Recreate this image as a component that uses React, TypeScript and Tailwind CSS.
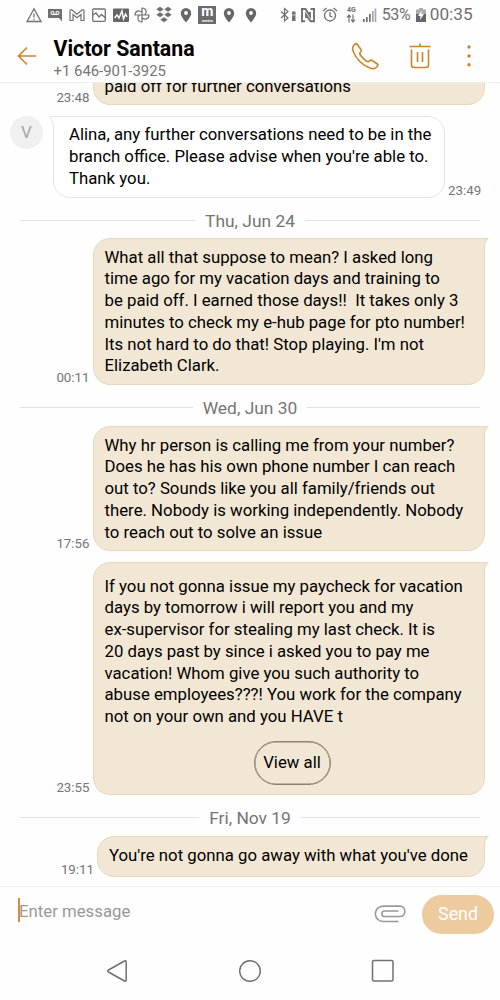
import type { ReactNode } from 'react'

function StatusIcon({ children }: { children: ReactNode }) {
  return (
    <svg width="21.750" height="22" viewBox="0 0 21.750 22" fill="none" stroke="#707070" strokeWidth="1.300" className="shrink-0">
      {children}
    </svg>
  )
}

function Pin() {
  return (
    <StatusIcon>
      <path d="M11 4a5.200 5.200 0 0 0-5.200 5.200C5.800 12.800 11 18.500 11 18.500s5.200-5.700 5.200-9.300A5.200 5.200 0 0 0 11 4Z" fill="#666" stroke="none" />
      <circle cx="11" cy="9" r="1.900" fill="#fff" stroke="none" />
    </StatusIcon>
  )
}

function StatusBar() {
  return (
    <div className="flex h-[30px] shrink-0 items-center pl-[22.500px] text-[#707070]">
      <StatusIcon>
        <path d="M11 4.800 18 17.500H4L11 4.800Z" />
        <path d="M11 9.500v4M11 14.800v1.400" />
      </StatusIcon>
      <StatusIcon>
        <path d="M4 5h14v12.500l-3-3.500H4V5Z" fill="#707070" stroke="none" />
        <circle cx="8.500" cy="9" r="1.500" stroke="#fff" strokeWidth="1.100" />
        <circle cx="13.500" cy="9" r="1.500" stroke="#fff" strokeWidth="1.100" />
        <path d="M8.500 10.500h5" stroke="#fff" strokeWidth="1.100" />
      </StatusIcon>
      <StatusIcon>
        <path d="M4 16.500V6.800c0-1.200 1.200-1.400 2-.8l5 4.200L16 6c.8-.6 2-.4 2 .8v9.700h-3v-6l-4 3.300-4-3.300v6H4Z" strokeWidth="1.200" />
      </StatusIcon>
      <StatusIcon>
        <rect x="4.700" y="5" width="12.600" height="12.300" rx="1" />
        <path d="m5 11 3-2 3 4 2.500-2.500 4 3.500" />
      </StatusIcon>
      <StatusIcon>
        <rect x="3" y="4.500" width="16" height="13.500" rx="1" fill="#666" stroke="none" />
        <path d="m4.500 14 2.500-3 2 3 3-7 1.500 8 2-5 1.500 3" stroke="#fff" strokeWidth="1.400" />
      </StatusIcon>
      <StatusIcon>
        <path d="M11 11V4c4 0 5.500 4 2.700 7ZM11 11h7c0 4-4 5.500-7 2.700ZM11 11v7c-4 0-5.500-4-2.700-7ZM11 11H4c0-4 4-5.500 7-2.700Z" strokeWidth="1.200" />
      </StatusIcon>
      <StatusIcon>
        <path d="m7 2.500 4 2.700-4 2.700-4-2.700 4-2.700Zm8 0 4 2.700-4 2.700-4-2.700 4-2.700ZM7 8l4 2.700-4 2.700-4-2.700L7 8Zm8 0 4 2.700-4 2.700-4-2.700L15 8Zm-4 5 4 2.700-4 2.700-4-2.700 4-2.700Z" fill="#707070" stroke="#fff" strokeWidth=".4" />
      </StatusIcon>
      <Pin />
      <div className="mx-[1.900px] flex h-[18px] w-[18px] shrink-0 flex-col items-center bg-[#6b6b6b] font-bold text-white">
        <span className="h-[13px] text-[14px] leading-[11px]">m</span>
        <span className="text-[4px] leading-[4px]">metro</span>
      </div>
      <Pin />
      <Pin />
      <svg width="17" height="22" viewBox="0 0 17 22" fill="none" stroke="#707070" strokeWidth="1.200" className="ml-[18px] shrink-0">
        <path d="m1 7.500 7 6.500-3.500 3V4.500L8 7.500 1 14" />
        <path d="M12 7.500h3.500V17H12z" fill="#707070" stroke="none" />
        <path d="M12 11h3.500" stroke="#fff" strokeWidth=".7" />
      </svg>
      <svg width="16" height="22" viewBox="0 0 16 22" fill="none" stroke="#707070" strokeWidth="1.900" className="ml-[3px] shrink-0">
        <path d="M5 17.200H2V5h3.500l4.500 7V8M10.500 5H14v12.200h-3.500L6 10.500V14" />
      </svg>
      <svg width="18" height="22" viewBox="0 0 18 22" fill="none" stroke="#707070" strokeWidth="1.300" className="ml-[5px] shrink-0">
        <circle cx="9" cy="11.500" r="5.500" />
        <path d="M9 8v4l2.500 1M2 7l3.500-3M16 7l-3.500-3" />
      </svg>
      <div className="ml-[7px] flex w-[11px] flex-col items-center">
        <span className="text-[7px] font-bold leading-[7px]">4G</span>
        <svg width="10" height="9" viewBox="0 0 10 9" fill="none" stroke="currentColor" strokeWidth="1.200">
          <path d="M3 8.500V1.500M1 3.500l2-2.500 2 2.500M7 .5v7M5 5.500 7 8l2-2.500" />
        </svg>
      </div>
      <svg width="15" height="22" viewBox="0 0 15 22" fill="#707070" className="ml-[5px] shrink-0">
        <path d="M1 15h1.700v3H1zM4 13h1.700v5H4zM7 10h1.700v8H7z" />
        <path d="M10 7h1.700v11H10zM12.600 4.500h1.700V18h-1.700z" fill="#aaa" />
      </svg>
      <span className="ml-[5px] w-[29px] text-[16px] tracking-[-0.400px]">53%</span>
      <svg width="10" height="22" viewBox="0 0 10 22" className="ml-[5px] shrink-0">
        <path d="M3 4h4v1.500h3V18H0V5.500h3V4Z" fill="#aaa" />
        <path d="M0 10h10v8H0z" fill="#666" />
        <path d="M5.500 6.500 2 12h2.500l-.5 4 4-6H5.300l.2-3.500Z" fill="#fff" />
      </svg>
      <span className="ml-[4px] text-[17.200px]">00:35</span>
    </div>
  )
}

function Header() {
  return (
    <header className="flex h-[53px] shrink-0 border-b border-[#eeeeee]">
      <svg width="20" height="20" viewBox="0 0 20 20" fill="none" stroke="#ca8429" strokeWidth="1.600" className="mt-[16px] ml-[17px] shrink-0">
        <path d="M19 10H1.500M10 1.500 1.500 10l8.500 8.500" />
      </svg>
      <div className="ml-[16.500px] w-[297.500px] whitespace-nowrap">
        <h1 className="mt-[7px] text-[21.300px] font-bold leading-[24px] text-black">Victor Santana</h1>
        <p className="mt-[2px] text-[14.900px] leading-[16px] text-[#757575]">+1 646-901-3925</p>
      </div>
      <svg width="28" height="28" viewBox="0 0 28 28" fill="none" stroke="#ca8429" strokeWidth="1.600" strokeLinejoin="round" className="mt-[12px] shrink-0">
        <path d="m5.500 1.500 4.500 6c.7 1 .4 1.700-.5 2.500-1.300 1.100-1 2 .2 3.600 1.500 2 3.200 3.700 5.300 5.200 1.700 1.200 2.600 1.400 3.600.2.900-1 1.600-1.200 2.600-.5l5.800 4c-.5 3.500-4 5-8 3.500C11.500 23.200 5.300 17 2.200 9.500.8 6 2 2.500 5.500 1.500Z" />
      </svg>
      <svg width="22" height="26" viewBox="0 0 22 26" fill="none" stroke="#ca8429" strokeWidth="1.600" className="mt-[12.500px] ml-[29.500px] shrink-0">
        <path d="M.5 3.500h21M11 .5v3M2.500 6.500V22c0 1.800 1 2.500 2.500 2.500h12c1.500 0 2.500-.7 2.500-2.500V6.500M8.500 9v10M13.500 9v10" />
      </svg>
      <svg width="6" height="24" viewBox="0 0 6 24" fill="#ca8429" className="mt-[14px] ml-[35.500px] shrink-0">
        <circle cx="3" cy="3" r="1.700" />
        <circle cx="3" cy="12" r="1.700" />
        <circle cx="3" cy="20.800" r="1.700" />
      </svg>
    </header>
  )
}

function DateDivider({ children }: { children: ReactNode }) {
  return (
    <div className="mx-[20px] flex items-center gap-[10px] text-[17.400px] leading-[22px] text-[#757575]">
      <span className="-mt-[2px] h-px flex-1 bg-[#e2e2e2]" />
      {children}
      <span className="-mt-[2px] h-px flex-1 bg-[#e2e2e2]" />
    </div>
  )
}

function SentMessage({ time, lines, className, children }: { time: string; lines: string[]; className: string; children?: ReactNode }) {
  return (
    <div className="flex items-end justify-end pr-[15px]">
      <time className="mr-[3px] text-[13.300px] leading-[14px] text-[#757575]">{time}</time>
      <div className={`relative rounded-[17px] rounded-tr-none border border-[#e6d8ba] bg-[#f2e7d5] pl-[11px] text-[16.780px] leading-[21.800px] text-black ${className}`}>
        {lines.map((line) => (
          <p key={line} className="whitespace-pre">{line}</p>
        ))}
        {children}
        {/* Bubble tail */}
        <svg width="6" height="14" viewBox="0 0 6 14" className="absolute -top-px -right-[5px]">
          <path d="M0 0h5.500C2.500 4 1 7 1 14H0Z" fill="#f2e7d5" />
          <path d="M0 .5h5C2 4 .5 7 .5 14" fill="none" stroke="#e6d8ba" />
          <path d="M0 1h.8v13H0z" fill="#f2e7d5" />
        </svg>
      </div>
    </div>
  )
}

export default function App() {
  return (
    <div className="flex h-[1000px] w-[500px] flex-col overflow-hidden bg-[#fefefe] font-['Roboto',sans-serif]">
      <StatusBar />
      <Header />

      {/* Conversation */}
      <main className="h-[803px] shrink-0 overflow-hidden">
        <div className="-mt-[19px]">
          <SentMessage time="23:48" lines={['paid off for further conversations']} className="h-[41px] w-[392.500px] pt-[11px]" />
        </div>

        <div className="mt-[11px] flex">
          <div className="ml-[10px] flex h-[33px] w-[33px] items-center justify-center rounded-full bg-[#f0f0f0] text-[17px] text-[#a5a5a5]">V</div>
          <div className="relative ml-[10px] h-[82px] w-[392px] rounded-[17px] rounded-tl-none border border-[#e4e4e4] bg-white pt-[7px] pl-[15px] text-[16.780px] leading-[21.800px] text-black">
            <p className="whitespace-pre">Alina, any further conversations need to be in the</p>
            <p>branch office. Please advise when you're able to.</p>
            <p>Thank you.</p>
            <svg width="6" height="14" viewBox="0 0 6 14" className="absolute -top-px -left-[5px]">
              <path d="M6 0H.5C3.500 4 4.500 7 4.500 14H6Z" fill="#fff" />
              <path d="M6 .5H1C3.500 4 4.500 7 4.500 14" fill="none" stroke="#e4e4e4" />
            </svg>
          </div>
          <time className="ml-[3px] self-end text-[13.300px] leading-[14px] text-[#757575]">23:49</time>
        </div>

        <div className="mt-[12px] mb-[6px]"><DateDivider>Thu, Jun 24</DateDivider></div>
        <SentMessage
          time="00:11"
          className="h-[147px] w-[392.500px] pt-[7.500px]"
          lines={[
            'What all that suppose to mean? I asked long',
            'time ago for my vacation days and training to',
            'be paid off. I earned those days!!  It takes only 3',
            'minutes to check my e-hub page for pto number!',
            "Its not hard to do that! Stop playing. I'm not",
            'Elizabeth Clark.',
          ]}
        />
        <div className="mt-[12px] mb-[7px]"><DateDivider>Wed, Jun 30</DateDivider></div>
        <SentMessage
          time="17:56"
          className="h-[125px] w-[392.500px] pt-[7.500px]"
          lines={[
            'Why hr person is calling me from your number?',
            'Does he has his own phone number I can reach',
            'out to? Sounds like you all family/friends out',
            'there. Nobody is working independently. Nobody',
            'to reach out to solve an issue',
          ]}
        />
        <div className="h-[11px]" />
        <SentMessage
          time="23:55"
          className="h-[233px] w-[392.500px] pt-[12.500px]"
          lines={[
            'If you not gonna issue my paycheck for vacation',
            'days by tomorrow i will report you and my',
            'ex-supervisor for stealing my last check. It is',
            '20 days past by since i asked you to pay me',
            'vacation! Whom give you such authority to',
            'abuse employees???! You work for the company',
            'not on your own and you HAVE t',
          ]}
        >
          <button className="mt-[13px] ml-[149px] block h-[44px] w-[77px] rounded-full border-[1.500px] border-[#8e8270] text-center shadow-[inset_0_0_0_0.500px_#8e8270]">View all</button>
        </SentMessage>
        <div className="mt-[12px] mb-[7px]"><DateDivider>Fri, Nov 19</DateDivider></div>
        <SentMessage time="19:11" lines={["You're not gonna go away with what you've done"]} className="h-[41px] w-[388px] pt-[8px]" />
      </main>

      {/* Composer */}
      <footer className="flex h-[56px] shrink-0 items-start border-t border-[#eeeeee]">
        <div className="mt-[11px] ml-[18px] flex h-[24px] w-[356px] items-center border-l-2 border-[#d49039] text-[16.780px] text-[#999]">
          <span className="-ml-px mt-[3px]">Enter message</span>
        </div>
        <svg width="32" height="18" viewBox="0 0 32 18" fill="none" stroke="#999" strokeWidth="1.600" className="mt-[18px] shrink-0">
          <path d="M24.500 16.500H9a7.700 7.700 0 0 1 0-15.400h17c6.500 0 6.500 10.400 0 10.400H10.500c-3.500 0-3.500-5.500 0-5.500h14" />
        </svg>
        <button className="mt-[8px] ml-[16px] h-[39px] w-[72px] rounded-full bg-[#eecb9f] text-[17.800px] text-white">Send</button>
      </footer>

      <nav className="flex h-[58px] shrink-0 items-start pt-[17px] text-[#707070]">
        <svg width="22" height="24" viewBox="0 0 22 24" fill="none" stroke="currentColor" strokeWidth="1.500" className="ml-[106px]">
          <path d="M18.500 2 2.500 11c-1 .6-1 1.400 0 2l16 9c1 .5 1.700 0 1.700-1V3c0-1-.7-1.500-1.700-1Z" />
        </svg>
        <svg width="24" height="24" viewBox="0 0 24 24" fill="none" stroke="currentColor" strokeWidth="1.400" className="ml-[110px]">
          <circle cx="12" cy="12" r="10.300" />
        </svg>
        <svg width="24" height="24" viewBox="0 0 24 24" fill="none" stroke="currentColor" strokeWidth="1.500" className="ml-[109px]">
          <rect x="1.500" y="1.500" width="20.500" height="20.500" rx="1.500" />
        </svg>
      </nav>
    </div>
  )
}
